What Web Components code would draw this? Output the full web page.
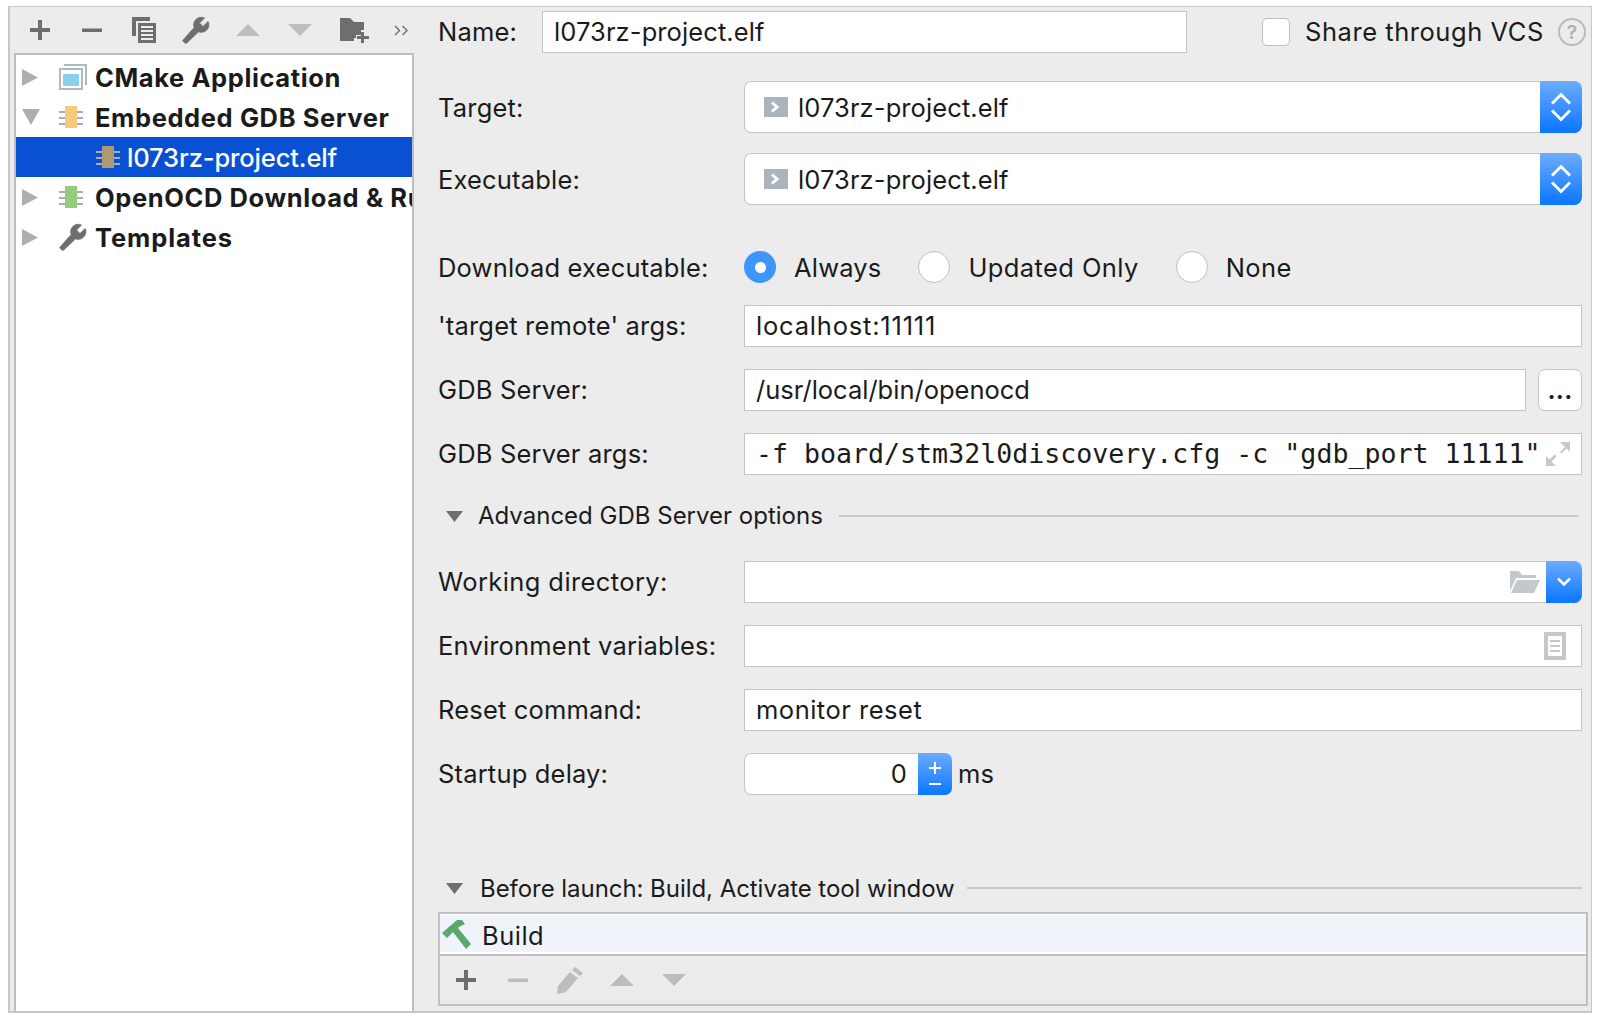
<!DOCTYPE html>
<html>
<head>
<meta charset="utf-8">
<title>Run configuration</title>
<style>
  html, body { margin: 0; padding: 0; background: #fff; }
  body {
    font-family: "Inter", "Liberation Sans", sans-serif;
    font-size: 25.5px;
    letter-spacing: 0.18px;
    color: #1b1b1b;
  }
</style>
</head>
<body>
<run-config>
  <tool-strip slot="left">
    <ide-icon name="plus"></ide-icon>
    <ide-icon name="minus"></ide-icon>
    <ide-icon name="copy"></ide-icon>
    <ide-icon name="wrench"></ide-icon>
    <ide-icon name="up"></ide-icon>
    <ide-icon name="down"></ide-icon>
    <ide-icon name="folderplus" style="margin-left:2px"></ide-icon>
    <ide-icon name="more" style="margin-left:-5px"></ide-icon>
  </tool-strip>
  <config-tree slot="left">
    <tree-row arrow="right" icon="cmake">CMake Application</tree-row>
    <tree-row arrow="down" icon="chip-yellow">Embedded GDB Server</tree-row>
    <tree-row selected icon="chip-brown">l073rz-project.elf</tree-row>
    <tree-row arrow="right" icon="chip-green">OpenOCD Download &amp; Run</tree-row>
    <tree-row arrow="right" icon="wrench" style="letter-spacing:.9px">Templates</tree-row>
  </config-tree>

  <name-bar slot="right"></name-bar>

  <form-row slot="right" label="Target:" top="28" h="52" style="--lab:0px"><combo-box>l073rz-project.elf</combo-box></form-row>
  <form-row slot="right" label="Executable:" top="20" h="52" style="--lab:0px"><combo-box>l073rz-project.elf</combo-box></form-row>
  <form-row slot="right" label="Download executable:" top="41" h="42" style="--lab:0px">
    <radio-group>
      <radio-option checked>Always</radio-option>
      <radio-option style="margin-left:37px;letter-spacing:.4px">Updated Only</radio-option>
      <radio-option style="margin-left:37px;letter-spacing:.4px">None</radio-option>
    </radio-group>
  </form-row>
  <form-row slot="right" label="'target remote' args:" top="17" h="42"><text-field style="letter-spacing:.8px">localhost:11111</text-field></form-row>
  <form-row slot="right" label="GDB Server:" top="22" h="42">
    <text-field style="letter-spacing:0">/usr/local/bin/openocd</text-field>
    <dots-button>...</dots-button>
  </form-row>
  <form-row slot="right" label="GDB Server args:" top="22" h="42"><text-field mono icon="expand">-f board/stm32l0discovery.cfg -c "gdb_port 11111"</text-field></form-row>

  <section-title slot="right" top="19" h="44" gap="16" tx="15" lift="2">Advanced GDB Server options</section-title>

  <form-row slot="right" label="Working directory:" top="23" h="42" style="letter-spacing:.4px"><text-field icon="folder" drop></text-field></form-row>
  <form-row slot="right" label="Environment variables:" top="22" h="42"><text-field icon="list" style="padding-right:15px"></text-field></form-row>
  <form-row slot="right" label="Reset command:" top="22" h="42"><text-field style="letter-spacing:.5px">monitor reset</text-field></form-row>
  <form-row slot="right" label="Startup delay:" top="22" h="42"><spin-field unit="ms">0</spin-field></form-row>

  <section-title slot="right" top="71" h="44" gap="12" end="0" tx="17" lift="0" style="letter-spacing:-.05px">Before launch: Build, Activate tool window</section-title>
  <launch-table slot="right"></launch-table>
</run-config>

<script>
const GREY = '#6e6e6e';
const LIGHT = '#bdbdbd';
const ICONS = {
  plus: `<svg width="22" height="22" viewBox="0 0 22 22"><path fill="${GREY}" d="M9 1h4v8h8v4h-8v8H9v-8H1V9h8z"/></svg>`,
  minus: `<svg width="22" height="22" viewBox="0 0 22 22"><path fill="${GREY}" d="M1 9.500h20v3.500H1z"/></svg>`,
  minusoff: `<svg width="22" height="22" viewBox="0 0 22 22"><path fill="${LIGHT}" d="M1 9.500h20v3.500H1z"/></svg>`,
  copy: `<svg width="24" height="26" viewBox="0 0 24 26"><path fill="${GREY}" d="M0 0h18v4H4v15H0z"/><path fill="${GREY}" d="M6 6h18v20H6z"/><path fill="#ececec" d="M9 9h12v2H9zM9 13h12v2H9zM9 17h12v2H9zM9 21h12v2H9z"/></svg>`,
  wrench: `<svg width="28" height="28" viewBox="0 0 24 24"><path fill="${GREY}" stroke="${GREY}" stroke-width=".7" transform="translate(24 0) scale(-1 1)" d="M23 20.500 13.600 9.900c.9-2.300.4-5-1.500-6.900-2-2-5-2.400-7.400-1.300L9 6 6 9 1.600 4.700C.4 7.100.9 10.100 2.900 12.100c1.900 1.900 4.600 2.400 6.900 1.500L20 23.200c.4.400 1 .4 1.400 0l1.500-1.300c.5-.4.5-1.100.1-1.400z"/></svg>`,
  up: `<svg width="24" height="12" viewBox="0 0 24 12"><path fill="${LIGHT}" d="M12 0l12 12H0z"/></svg>`,
  down: `<svg width="24" height="12" viewBox="0 0 24 12"><path fill="${LIGHT}" d="M0 0h24L12 12z"/></svg>`,
  folderplus: `<svg width="29" height="25" viewBox="0 0 29 25"><path fill="${GREY}" d="M0 0h10l4 4h10v8h-3v5h-5v3h-2v3H0z"/><path fill="${GREY}" d="M21 14h3v4h5v3h-5v4h-3v-4h-4v-3h4z"/></svg>`,
  more: `<svg width="15" height="11" viewBox="0 0 15 11"><path fill="none" stroke="${GREY}" stroke-width="1.400" d="M1 1l4.500 4.500L1 10M8.500 1l4.500 4.500L8.500 10"/></svg>`,
  cmake: `<svg width="28" height="26" viewBox="0 0 28 26"><path fill="#afbac0" d="M5 0h23v21h-2V2H5z"/><path fill="#afbac0" d="M0 4h24v22H0z"/><path fill="#fff" d="M2 6h20v18H2z"/><path fill="#8ad0ec" d="M4 10h16v12H4z"/></svg>`,
  'chip-yellow': chip('#f6ca7d'),
  'chip-green': chip('#96cb7c'),
  'chip-brown': chip('#ae9a70'),
  expand: `<svg width="24" height="24" viewBox="0 0 24 24"><path fill="#c8c8c8" d="M14 0h10v10l-3.500-3.500-5 5-1.500-1.500 5-5zM0 24V14l3.500 3.500 5-5 2 2-5 5L10 24z"/></svg>`,
  folder: `<svg width="30" height="22" viewBox="0 0 30 22"><path fill="#c3c8cc" d="M0 20V0h9l3 4h14v3H6z"/><path fill="#c3c8cc" d="M7 9h23l-6 13H1z"/></svg>`,
  list: `<svg width="22" height="28" viewBox="0 0 22 28"><path fill="#c3c8cc" d="M0 0h22v28H0z"/><path fill="#fff" d="M4 4h14v20H4z"/><path fill="#c3c8cc" d="M6 8h10v2H6zM6 13h10v2H6zM6 18h10v2H6z"/></svg>`,
  elf: `<svg width="24" height="20" viewBox="0 0 24 20"><path fill="#aab4ba" d="M0 0h24v20H0z"/><path fill="none" stroke="#fff" stroke-width="3" d="M8 5.500l5 4.500-5 4.500"/></svg>`,
  hammer: `<svg width="29" height="29" viewBox="0 0 29 29"><path fill="#5aa86c" d="M0 13L15 0l5 0 3 4-6 3-1 1 13 16-5 5L11 12 5 18z"/></svg>`,
  pencil: `<svg width="26" height="27" viewBox="0 0 26 27"><path fill="${LIGHT}" d="M18 0l8 6-3 3-8-6zM13 5l8 6L9 25l-9 2 1-8z"/></svg>`,
};

function chip(color) {
  return `<svg width="24" height="22" viewBox="0 0 24 22"><path fill="#a6aeb3" d="M0 5h24v2H0zM0 11h24v2H0zM0 17h24v2H0z"/><path fill="${color}" d="M6 0h12v22H6z"/></svg>`;
}

class IdeIcon extends HTMLElement {
  constructor() {
    super();
    this.attachShadow({ mode: 'open' });
    this.shadowRoot.innerHTML = `
      <style>
        :host { display: inline-flex; align-items: center; justify-content: center; flex: none; }
        svg { display: block; }
      </style>
      ${ICONS[this.getAttribute('name')] || ''}
    `;
  }
}

class RunConfig extends HTMLElement {
  constructor() {
    super();
    this.attachShadow({ mode: 'open' });
    this.shadowRoot.innerHTML = `
      <style>
        :host {
          display: flex;
          box-sizing: border-box;
          width: 1584px;
          height: 1007px;
          margin: 6px 0 0 8px;
          background: #ececec;
          border: 1px solid #c8c8c8;
          border-width: 1px 1px 2px 2px;
        }
        .left { display: flex; flex-direction: column; width: 400px; padding-left: 4px; flex: none; }
        .right { display: flex; flex-direction: column; flex: 1; padding: 0 9px 0 24px; min-width: 0; }
      </style>
      <div class="left"><slot name="left"></slot></div>
      <div class="right"><slot name="right"></slot></div>
    `;
  }
}

class ToolStrip extends HTMLElement {
  constructor() {
    super();
    this.attachShadow({ mode: 'open' });
    this.shadowRoot.innerHTML = `
      <style>
        :host { display: flex; height: 46px; align-items: center; flex: none; }
        ::slotted(ide-icon) { width: 52px; }
      </style>
      <slot></slot>
    `;
  }
}

class ConfigTree extends HTMLElement {
  constructor() {
    super();
    this.attachShadow({ mode: 'open' });
    this.shadowRoot.innerHTML = `
      <style>
        :host {
          display: flex;
          flex-direction: column;
          flex: 1;
          background: #fff;
          border: 2px solid #bdbdbd;
          border-bottom: 0;
          padding-top: 2px;
          overflow: hidden;
        }
      </style>
      <slot></slot>
    `;
  }
}

class TreeRow extends HTMLElement {
  constructor() {
    super();
    const arrow = this.getAttribute('arrow');
    const icon = this.getAttribute('icon');
    const selected = this.hasAttribute('selected');
    const tri = arrow === 'down'
      ? '<path d="M0 0h18L9 16z"/>'
      : '<path d="M0 0l16 8.500L0 17z"/>';

    this.attachShadow({ mode: 'open' });
    this.shadowRoot.innerHTML = `
      <style>
        :host {
          display: flex;
          align-items: center;
          height: 40px;
          flex: none;
          white-space: nowrap;
          font-weight: ${selected ? 500 : 700};
          letter-spacing: ${selected ? '-0.14px' : '0.6px'};
          color: ${selected ? '#fff' : '#1b1b1b'};
          background: ${selected ? '#0a50d2' : 'transparent'};
        }
        .arrow { width: 43px; padding-left: 6px; box-sizing: border-box; flex: none; display: flex; }
        .icon { width: 36px; display: flex; flex: none; }
        .icon.sel { margin-left: 37px; width: 31px; }
        svg.tri { fill: #aeaeae; display: block; }
      </style>
      <span class="arrow">${arrow ? `<svg class="tri" width="18" height="17">${tri}</svg>` : ''}</span>
      <span class="icon ${selected ? 'sel' : ''}"><ide-icon name="${icon}"></ide-icon></span>
      <slot></slot>
    `;
  }
}

class FormRow extends HTMLElement {
  constructor() {
    super();
    this.attachShadow({ mode: 'open' });
    this.shadowRoot.innerHTML = `
      <style>
        :host {
          display: grid;
          grid-template-columns: 306px 1fr;
          align-items: center;
          flex: none;
          height: ${this.getAttribute('h') || 42}px;
          margin-top: ${this.getAttribute('top') || 0}px;
          white-space: nowrap;
        }
        .label { padding-bottom: var(--lab, 1px); }
        .control { display: flex; gap: 12px; height: 100%; align-items: center; min-width: 0; }
      </style>
      <span class="label">${this.getAttribute('label')}</span>
      <div class="control"><slot></slot></div>
    `;
  }
}

class NameBar extends HTMLElement {
  constructor() {
    super();
    this.attachShadow({ mode: 'open' });
    this.shadowRoot.innerHTML = `
      <style>
        :host { display: flex; align-items: center; height: 42px; margin-top: 4px; flex: none; white-space: nowrap; }
        .label { width: 104px; flex: none; padding-bottom: 2px; }
        text-field { width: 645px; flex: none; height: 42px; letter-spacing: 0.1px; }
        .box {
          width: 28px; height: 28px; box-sizing: border-box; flex: none; margin-left: 75px;
          background: #fff; border: 1px solid #c0c0c0; border-radius: 5px;
        }
        .text { margin-left: 15px; letter-spacing: 0.55px; padding-bottom: 2px; }
        .help {
          width: 28px; height: 28px; box-sizing: border-box; margin-left: 14px; flex: none;
          border: 2px solid #b6bcc0; border-radius: 50%;
          font-size: 19px; font-weight: 600; color: #a9afb3;
          display: flex; align-items: center; justify-content: center;
        }
      </style>
      <span class="label">Name:</span>
      <text-field>l073rz-project.elf</text-field>
      <span class="box"></span>
      <span class="text">Share through VCS</span>
      <span class="help">?</span>
    `;
  }
}

class TextField extends HTMLElement {
  constructor() {
    super();
    const mono = this.hasAttribute('mono');
    const icon = this.getAttribute('icon');
    const drop = this.hasAttribute('drop');

    this.attachShadow({ mode: 'open' });
    this.shadowRoot.innerHTML = `
      <style>
        :host {
          display: flex;
          align-items: center;
          flex: 1;
          box-sizing: border-box;
          height: 42px;
          min-width: 0;
          background: #fff;
          border: 1.5px solid #c4c4c4;
          padding-left: 11px;
          white-space: nowrap;
          ${drop ? 'padding-right: 0; border-right: 0; border-radius: 0 8px 8px 0;' : 'padding-right: 10px;'}
          ${mono ? 'font-family: "DejaVu Sans Mono", monospace; font-size: 26.6px; letter-spacing: 0; padding-right: 11px;' : ''}
        }
        .text { flex: 1; min-width: 0; padding-bottom: 1px; }
        .drop {
          width: 36px; height: 42px; flex: none; margin-left: 6px;
          background: linear-gradient(#6cacff, #0a76ff);
          border-radius: 0 8px 8px 0;
          display: flex; align-items: center; justify-content: center;
        }
      </style>
      <span class="text"><slot></slot></span>
      ${icon ? `<ide-icon name="${icon}"></ide-icon>` : ''}
      ${drop ? `<span class="drop"><svg width="16" height="10"><path d="M2 1.500l6 6 6-6" fill="none" stroke="#fff" stroke-width="2.500"/></svg></span>` : ''}
    `;
  }
}

class ComboBox extends HTMLElement {
  constructor() {
    super();
    this.attachShadow({ mode: 'open' });
    this.shadowRoot.innerHTML = `
      <style>
        :host {
          display: flex;
          align-items: center;
          flex: 1;
          height: 52px;
          box-sizing: border-box;
          background: #fff;
          border: 1.5px solid #c4c4c4;
          border-right: 0;
          border-radius: 7px 8px 8px 7px;
          padding-left: 19px;
          white-space: nowrap;
        }
        .text { flex: 1; margin-left: 10px; letter-spacing: 0.1px; }
        .btn {
          width: 42px; height: 52px; flex: none;
          background: linear-gradient(#6cacff, #0a76ff);
          border-radius: 0 8px 8px 0;
          display: flex; align-items: center; justify-content: center;
        }
      </style>
      <ide-icon name="elf"></ide-icon>
      <span class="text"><slot></slot></span>
      <span class="btn">
        <svg width="20" height="30" viewBox="0 0 20 30"><path d="M1 11.500l9-9 9 9M1 18.500l9 9 9-9" fill="none" stroke="#fff" stroke-width="3"/></svg>
      </span>
    `;
  }
}

class RadioGroup extends HTMLElement {
  constructor() {
    super();
    this.attachShadow({ mode: 'open' });
    this.shadowRoot.innerHTML = `
      <style>:host { display: flex; align-items: center; white-space: nowrap; }</style>
      <slot></slot>
    `;
  }
}

class RadioOption extends HTMLElement {
  constructor() {
    super();
    const checked = this.hasAttribute('checked');
    this.attachShadow({ mode: 'open' });
    this.shadowRoot.innerHTML = `
      <style>
        :host { display: inline-flex; align-items: center; gap: 18px; }
        .dot {
          width: 32px; height: 32px; box-sizing: border-box; border-radius: 50%; flex: none;
          display: flex; align-items: center; justify-content: center;
          background: ${checked ? '#3d96f8' : '#fff'};
          border: ${checked ? '0' : '1px solid #c0c0c0'};
        }
        .dot i { width: 11px; height: 11px; border-radius: 50%; background: #fff; display: ${checked ? 'block' : 'none'}; }
      </style>
      <span class="dot"><i></i></span>
      <slot></slot>
    `;
  }
}

class DotsButton extends HTMLElement {
  constructor() {
    super();
    this.attachShadow({ mode: 'open' });
    this.shadowRoot.innerHTML = `
      <style>
        :host {
          display: flex; align-items: center; justify-content: center;
          width: 44px; height: 42px; box-sizing: border-box; flex: none;
          background: #fff; border: 1.5px solid #c4c4c4; border-radius: 7px;
          font-weight: 600; padding-bottom: 2px;
        }
      </style>
      <slot></slot>
    `;
  }
}

class SpinField extends HTMLElement {
  constructor() {
    super();
    this.attachShadow({ mode: 'open' });
    this.shadowRoot.innerHTML = `
      <style>
        :host { display: flex; align-items: center; height: 42px; }
        .value {
          width: 174px; height: 42px; box-sizing: border-box;
          display: flex; align-items: center; justify-content: flex-end; padding: 0 11px 1px 0;
          background: #fff; border: 1.5px solid #c4c4c4; border-right: 0; border-radius: 7px 0 0 7px;
        }
        .btn {
          width: 34px; height: 42px; background: linear-gradient(#6cacff, #0a76ff);
          border-radius: 0 7px 7px 0; display: flex; align-items: center; justify-content: center;
        }
        .unit { margin-left: 6px; padding-bottom: 1px; }
      </style>
      <div class="value"><slot></slot></div>
      <div class="btn">
        <svg width="14" height="30" viewBox="0 0 14 30"><path fill="#fff" d="M6 3h2v5h5v2H8v5H6v-5H1V8h5zM1 24h12v2H1z"/></svg>
      </div>
      <span class="unit">${this.getAttribute('unit')}</span>
    `;
  }
}

class SectionTitle extends HTMLElement {
  constructor() {
    super();
    this.attachShadow({ mode: 'open' });
    this.shadowRoot.innerHTML = `
      <style>
        :host {
          display: flex; align-items: center; flex: none;
          height: ${this.getAttribute('h')}px;
          margin-top: ${this.getAttribute('top')}px;
          white-space: nowrap;
          font-size: 24px;
          letter-spacing: 0;
          padding-left: 8px;
        }
        svg { flex: none; margin-right: ${this.getAttribute('tx')}px; display: block; }
        .text { padding-bottom: ${this.getAttribute('lift')}px; }
        .line { flex: 1; height: 2px; background: #c8c8c8; margin-left: ${this.getAttribute('gap')}px; margin-right: ${this.getAttribute('end') || 4}px; }
      </style>
      <svg width="17" height="11"><path d="M0 0h17L8.500 11z" fill="#6e6e6e"/></svg>
      <span class="text"><slot></slot></span>
      <span class="line"></span>
    `;
  }
}

class LaunchTable extends HTMLElement {
  constructor() {
    super();
    this.attachShadow({ mode: 'open' });
    this.shadowRoot.innerHTML = `
      <style>
        :host {
          display: flex; flex-direction: column; flex: none;
          box-sizing: border-box;
          height: 94px;
          margin: 2px -6px 0 0;
          border: 2px solid #c0c0c0;
        }
        .row {
          height: 40px; display: flex; align-items: center; gap: 11px; flex: none;
          box-sizing: border-box; padding: 1px 0 0 2px;
          background: #f0f4fa;
          border-top: 1px solid #fff;
          border-bottom: 2px solid #fff;
        }
        .row span { padding-top: 2px; letter-spacing: .5px; }
        .bar {
          flex: 1; display: flex; align-items: center;
          border-top: 2px solid #c0c0c0;
        }
        .bar ide-icon { width: 52px; height: 28px; }
      </style>
      <div class="row"><ide-icon name="hammer"></ide-icon><span>Build</span></div>
      <div class="bar">
        <ide-icon name="plus"></ide-icon>
        <ide-icon name="minusoff"></ide-icon>
        <ide-icon name="pencil"></ide-icon>
        <ide-icon name="up"></ide-icon>
        <ide-icon name="down"></ide-icon>
      </div>
    `;
  }
}

customElements.define('ide-icon', IdeIcon);
customElements.define('tool-strip', ToolStrip);
customElements.define('config-tree', ConfigTree);
customElements.define('tree-row', TreeRow);
customElements.define('name-bar', NameBar);
customElements.define('form-row', FormRow);
customElements.define('text-field', TextField);
customElements.define('combo-box', ComboBox);
customElements.define('radio-group', RadioGroup);
customElements.define('radio-option', RadioOption);
customElements.define('dots-button', DotsButton);
customElements.define('spin-field', SpinField);
customElements.define('section-title', SectionTitle);
customElements.define('launch-table', LaunchTable);
customElements.define('run-config', RunConfig);
</script>
</body>
</html>
